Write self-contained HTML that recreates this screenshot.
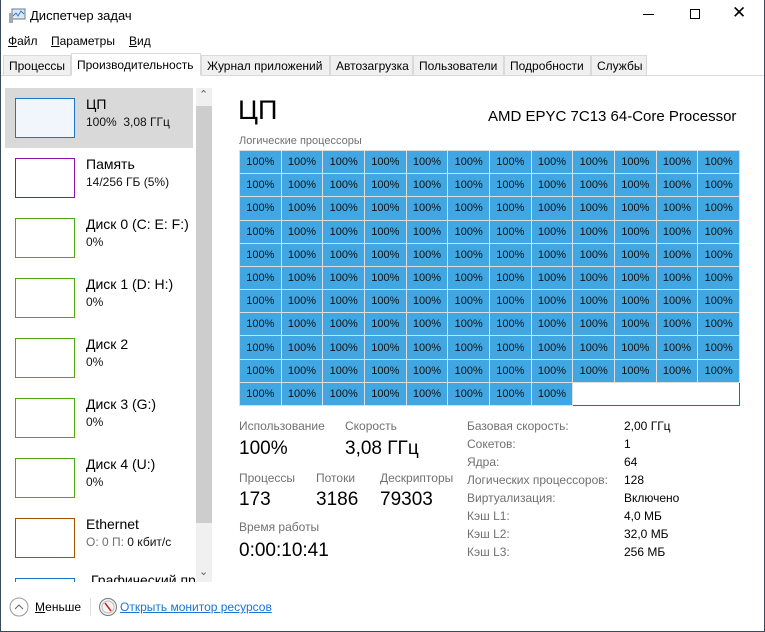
<!DOCTYPE html><html><head><meta charset="utf-8"><style>
*{margin:0;padding:0;box-sizing:border-box}
body{width:765px;height:632px;overflow:hidden;background:#fff;font-family:"Liberation Sans","DejaVu Sans",sans-serif;color:#000;position:relative}
.abs{position:absolute;white-space:nowrap}
#frame{position:absolute;left:0;top:0;width:765px;height:632px;border:1px solid #3a4a5a;border-top:none;pointer-events:none}
.tab{position:absolute;top:55px;height:21px;background:#f0f0f0;border:1px solid #d9d9d9;font-size:12px;padding:3px 5px 0;white-space:nowrap}
.item{position:absolute;left:5px;width:188px;height:60px}
.thumb{position:absolute;left:10px;top:10px;width:60px;height:40px;border:1px solid}
.it{position:absolute;left:81px;top:8px;font-size:14px;white-space:nowrap}
.is{position:absolute;left:81px;top:27px;font-size:12px;color:#111;white-space:nowrap}
#grid{position:absolute;left:239px;top:150px;width:501px;height:256px;border:1px solid #1f6fa3;background:#fff;display:grid;grid-template-columns:repeat(12,1fr);grid-template-rows:repeat(11,1fr);gap:1px}
#grid div{background:#41a7e3;font-size:11px;display:flex;align-items:center;justify-content:center;color:#111;outline:1px solid #ddd}
.lab{font-size:12px;color:#707070}
.val{font-size:19px}
.rl{font-size:12px;color:#707070;left:467px}
.rv{font-size:12px;left:624px}
</style></head><body>
<svg class="abs" style="left:8px;top:8px" width="18" height="16"><rect x="4" y="1" width="13" height="10" fill="#dfe9f3" stroke="#6a7b8a"/><polyline points="5,8 8,5 10,8 13,3 16,6" fill="none" stroke="#2a7ad0"/><rect x="1" y="5" width="4" height="10" fill="#a0a8b0"/></svg>
<div class="abs" style="left:30px;top:8px;font-size:13px">Диспетчер задач</div>
<div class="abs" style="left:643px;top:14px;width:11px;height:1px;background:#000"></div>
<div class="abs" style="left:690px;top:9px;width:10px;height:10px;border:1px solid #000"></div>
<div class="abs" style="left:732px;top:3px;font-size:17px;font-weight:300">✕</div>
<div class="abs" style="left:8px;top:34px;font-size:12px"><u>Ф</u>айл</div>
<div class="abs" style="left:51px;top:34px;font-size:12px"><u>П</u>араметры</div>
<div class="abs" style="left:129px;top:34px;font-size:12px"><u>В</u>ид</div>
<div class="abs" style="left:0;top:75px;width:765px;height:1px;background:#d9d9d9"></div>
<div class="tab" style="left:3px;width:68px">Процессы</div>
<div class="tab" style="left:71px;top:53px;height:23px;width:130px;background:#fff;border-bottom-color:#fff;padding-top:4px">Производительность</div>
<div class="tab" style="left:201px;width:129px">Журнал приложений</div>
<div class="tab" style="left:330px;width:83px">Автозагрузка</div>
<div class="tab" style="left:413px;width:91px">Пользователи</div>
<div class="tab" style="left:504px;width:87px">Подробности</div>
<div class="tab" style="left:591px;width:56px">Службы</div>

<div class="item" style="top:88px;background:#d9d9d9"><div class="thumb" style="border-color:#1c75c4;background:#f0f6fb"></div><div class="it">ЦП</div><div class="is">100%&nbsp; 3,08 ГГц</div></div>
<div class="item" style="top:148px"><div class="thumb" style="border-color:#8b12ae"></div><div class="it">Память</div><div class="is">14/256 ГБ (5%)</div></div>
<div class="item" style="top:208px"><div class="thumb" style="border-color:#4da60c"></div><div class="it">Диск 0 (C: E: F:)</div><div class="is">0%</div></div>
<div class="item" style="top:268px"><div class="thumb" style="border-color:#4da60c"></div><div class="it">Диск 1 (D: H:)</div><div class="is">0%</div></div>
<div class="item" style="top:328px"><div class="thumb" style="border-color:#4da60c"></div><div class="it">Диск 2</div><div class="is">0%</div></div>
<div class="item" style="top:388px"><div class="thumb" style="border-color:#4da60c"></div><div class="it">Диск 3 (G:)</div><div class="is">0%</div></div>
<div class="item" style="top:448px"><div class="thumb" style="border-color:#4da60c"></div><div class="it">Диск 4 (U:)</div><div class="is">0%</div></div>
<div class="item" style="top:508px"><div class="thumb" style="border-color:#a74f01"></div><div class="it">Ethernet</div><div class="is"><span style="color:#707070">О: 0 П:</span> 0 кбит/с</div></div>
<div class="abs" style="left:5px;top:568px;width:190px;height:14px;overflow:hidden"><div class="abs" style="left:10px;top:10px;width:60px;height:10px;border:1px solid #1c75c4;border-bottom:none"></div><div class="abs" style="left:86px;top:4px;font-size:14px">Графический пр</div></div>
<div class="abs" style="left:196px;top:88px;width:16px;height:494px;background:#f0f0f0"></div>
<div class="abs" style="left:196px;top:106px;width:16px;height:417px;background:#cdcdcd"></div>
<div class="abs" style="left:199px;top:88px;font-size:11px;color:#606060">⌃</div>
<div class="abs" style="left:199px;top:565px;font-size:11px;color:#606060">⌄</div>

<div class="abs" style="left:238px;top:95px;font-size:27px">ЦП</div>
<div class="abs" style="left:488px;top:108px;font-size:15px">AMD EPYC 7C13 64-Core Processor</div>
<div class="abs lab" style="left:239px;top:135px;font-size:11px">Логические процессоры</div>
<div id="grid">
<div>100%</div><div>100%</div><div>100%</div><div>100%</div><div>100%</div><div>100%</div><div>100%</div><div>100%</div><div>100%</div><div>100%</div><div>100%</div><div>100%</div>
<div>100%</div><div>100%</div><div>100%</div><div>100%</div><div>100%</div><div>100%</div><div>100%</div><div>100%</div><div>100%</div><div>100%</div><div>100%</div><div>100%</div>
<div>100%</div><div>100%</div><div>100%</div><div>100%</div><div>100%</div><div>100%</div><div>100%</div><div>100%</div><div>100%</div><div>100%</div><div>100%</div><div>100%</div>
<div>100%</div><div>100%</div><div>100%</div><div>100%</div><div>100%</div><div>100%</div><div>100%</div><div>100%</div><div>100%</div><div>100%</div><div>100%</div><div>100%</div>
<div>100%</div><div>100%</div><div>100%</div><div>100%</div><div>100%</div><div>100%</div><div>100%</div><div>100%</div><div>100%</div><div>100%</div><div>100%</div><div>100%</div>
<div>100%</div><div>100%</div><div>100%</div><div>100%</div><div>100%</div><div>100%</div><div>100%</div><div>100%</div><div>100%</div><div>100%</div><div>100%</div><div>100%</div>
<div>100%</div><div>100%</div><div>100%</div><div>100%</div><div>100%</div><div>100%</div><div>100%</div><div>100%</div><div>100%</div><div>100%</div><div>100%</div><div>100%</div>
<div>100%</div><div>100%</div><div>100%</div><div>100%</div><div>100%</div><div>100%</div><div>100%</div><div>100%</div><div>100%</div><div>100%</div><div>100%</div><div>100%</div>
<div>100%</div><div>100%</div><div>100%</div><div>100%</div><div>100%</div><div>100%</div><div>100%</div><div>100%</div><div>100%</div><div>100%</div><div>100%</div><div>100%</div>
<div>100%</div><div>100%</div><div>100%</div><div>100%</div><div>100%</div><div>100%</div><div>100%</div><div>100%</div><div>100%</div><div>100%</div><div>100%</div><div>100%</div>
<div>100%</div><div>100%</div><div>100%</div><div>100%</div><div>100%</div><div>100%</div><div>100%</div><div>100%</div>
</div>

<div class="abs lab" style="left:239px;top:419px">Использование</div>
<div class="abs lab" style="left:345px;top:419px">Скорость</div>
<div class="abs val" style="left:239px;top:438px">100%</div>
<div class="abs val" style="left:345px;top:438px">3,08 ГГц</div>
<div class="abs lab" style="left:239px;top:471px">Процессы</div>
<div class="abs lab" style="left:316px;top:471px">Потоки</div>
<div class="abs lab" style="left:380px;top:471px">Дескрипторы</div>
<div class="abs val" style="left:239px;top:489px">173</div>
<div class="abs val" style="left:316px;top:489px">3186</div>
<div class="abs val" style="left:380px;top:489px">79303</div>
<div class="abs lab" style="left:239px;top:520px">Время работы</div>
<div class="abs val" style="left:239px;top:540px">0:00:10:41</div>

<div class="abs rl" style="top:419px">Базовая скорость:</div><div class="abs rv" style="top:419px">2,00 ГГц</div>
<div class="abs rl" style="top:437px">Сокетов:</div><div class="abs rv" style="top:437px">1</div>
<div class="abs rl" style="top:455px">Ядра:</div><div class="abs rv" style="top:455px">64</div>
<div class="abs rl" style="top:473px">Логических процессоров:</div><div class="abs rv" style="top:473px">128</div>
<div class="abs rl" style="top:491px">Виртуализация:</div><div class="abs rv" style="top:491px">Включено</div>
<div class="abs rl" style="top:509px">Кэш L1:</div><div class="abs rv" style="top:509px">4,0 МБ</div>
<div class="abs rl" style="top:527px">Кэш L2:</div><div class="abs rv" style="top:527px">32,0 МБ</div>
<div class="abs rl" style="top:545px">Кэш L3:</div><div class="abs rv" style="top:545px">256 МБ</div>

<svg class="abs" style="left:9px;top:597px" width="20" height="20"><circle cx="10" cy="10" r="9" fill="none" stroke="#999"/><polyline points="6,12 10,8 14,12" fill="none" stroke="#666"/></svg>
<div class="abs" style="left:35px;top:600px;font-size:12px"><u>М</u>еньше</div>
<div class="abs" style="left:90px;top:598px;width:1px;height:18px;background:#ddd"></div>
<svg class="abs" style="left:98px;top:597px" width="20" height="20"><circle cx="10" cy="10" r="8.5" fill="#f4f4f4" stroke="#777"/><circle cx="10" cy="10" r="6" fill="none" stroke="#bbb"/><line x1="7" y1="6" x2="13" y2="14" stroke="#d02020" stroke-width="1.5"/></svg>
<div class="abs" style="left:120px;top:600px;font-size:12px;color:#1a73d9;text-decoration:underline">Открыть монитор ресурсов</div>
<div id="frame"></div>
</body></html>
